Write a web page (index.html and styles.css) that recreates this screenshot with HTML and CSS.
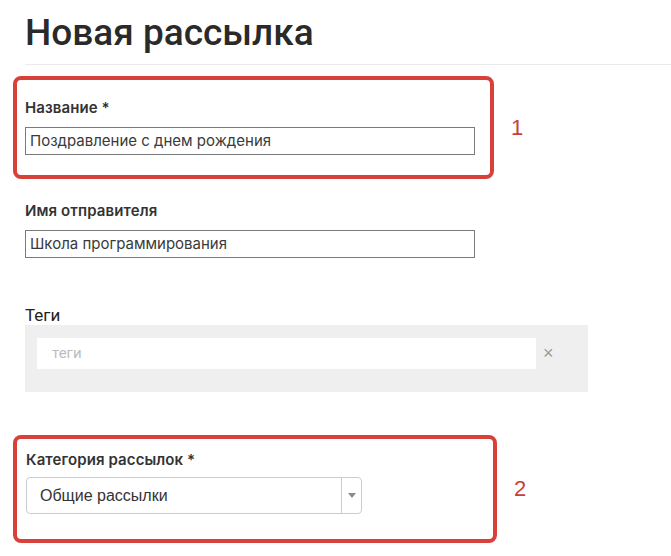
FILE: index.html
```html
<!DOCTYPE html>
<html lang="ru">
<head>
<meta charset="utf-8">
<title>Новая рассылка</title>
<link rel="stylesheet" href="styles.css">
</head>
<body>
<div class="page">
  <header class="page-header">
    <h1 class="page-title">Новая рассылка</h1>
  </header>

  <div class="field-row">
    <div class="field-box field-box--marked field-box--wide">
      <label class="field-label">Название *</label>
      <div class="text-input">Поздравление с днем рождения</div>
    </div>
    <span class="marker">1</span>
  </div>

  <div class="field-row">
    <div class="field-box field-box--wide">
      <label class="field-label">Имя отправителя</label>
      <div class="text-input">Школа программирования</div>
    </div>
  </div>

  <div class="tags-field">
    <label class="tags-label">Теги</label>
    <div class="tags-box">
      <div class="tags-input">теги</div>
      <span class="tags-clear">×</span>
    </div>
  </div>

  <div class="field-row field-row--category">
    <div class="field-box field-box--marked field-box--category">
      <label class="field-label">Категория рассылок *</label>
      <div class="select">
        <span class="select-value">Общие рассылки</span>
        <span class="select-arrow"><span class="arrow-down"></span></span>
      </div>
    </div>
    <span class="marker">2</span>
  </div>
</div>
</body>
</html>
```

FILE: styles.css
```css
* { box-sizing: border-box; }

html, body {
  margin: 0;
  padding: 0;
  background: #ffffff;
}

body {
  font-family: "Liberation Sans", Arial, sans-serif;
  color: #333333;
}

.page {
  width: 671px;
  height: 556px;
  overflow: hidden;
}

.page-header {
  margin-left: 25px;
  padding-bottom: 9px;
  border-bottom: 1px solid #ebebeb;
}

.page-title {
  margin: 10px 0 0 0;
  font-family: Roboto, "Liberation Sans", sans-serif;
  font-weight: 500;
  font-size: 37px;
  line-height: 45px;
  color: #2a2a2a;
}

.field-row {
  display: flex;
  align-items: center;
  gap: 17px;
  margin-left: 13px;
}

.page-header + .field-row { margin-top: 11px; }

.field-box {
  border: 4px solid transparent;
  border-radius: 8px;
  padding: 18px 15px 20px 8px;
}

.field-box--wide { width: 481px; }

.field-box--marked { border-color: #d8413a; }

.field-label {
  display: block;
  font-family: Inter, "Noto Sans", sans-serif;
  font-weight: 600;
  font-size: 15px;
  line-height: 20px;
  letter-spacing: 0.1px;
  color: #333333;
  margin-bottom: 9px;
}

.text-input {
  width: 450px;
  height: 28px;
  border: 1px solid #7a7a7a;
  padding: 0 4px;
  font-family: Inter, "Noto Sans", sans-serif;
  font-size: 15px;
  line-height: 26px;
  color: #3a3a3a;
}

.marker {
  font-family: "Liberation Sans", Arial, sans-serif;
  font-size: 22px;
  color: #c9403a;
}

.tags-field {
  margin: 25px 0 0 25px;
}

.tags-label {
  display: block;
  font-family: Roboto, "Liberation Sans", sans-serif;
  font-size: 17px;
  line-height: 17px;
  color: #222222;
  margin-bottom: 1px;
}

.tags-box {
  display: flex;
  align-items: center;
  width: 563px;
  background: #efefef;
  padding: 13px 0 23px 12px;
}

.tags-input {
  width: 499px;
  height: 31px;
  background: #ffffff;
  padding-left: 15px;
  font-family: Roboto, "Liberation Sans", sans-serif;
  font-size: 15px;
  line-height: 31px;
  color: #bdbdbd;
}

.tags-clear {
  margin-left: 7px;
  font-family: "Liberation Sans", Arial, sans-serif;
  font-size: 18px;
  color: #9a9a9a;
}

.field-row--category { margin-top: 43px; }

.field-box--category {
  width: 484px;
  padding: 11px 15px 25px 9px;
}

.field-box--category .field-label { margin-bottom: 7px; }

.select {
  display: flex;
  width: 336px;
  height: 37px;
  border: 1px solid #cccccc;
  border-radius: 4px;
}

.select-value {
  flex: 1;
  padding-left: 13px;
  font-family: "Liberation Sans", Arial, sans-serif;
  font-size: 16px;
  line-height: 35px;
  color: #333333;
}

.select-arrow {
  width: 20px;
  border-left: 1px solid #cccccc;
  display: flex;
  align-items: center;
  justify-content: center;
}

.arrow-down {
  width: 0;
  height: 0;
  border-left: 4px solid transparent;
  border-right: 4px solid transparent;
  border-top: 5px solid #8a8a8a;
}
```
